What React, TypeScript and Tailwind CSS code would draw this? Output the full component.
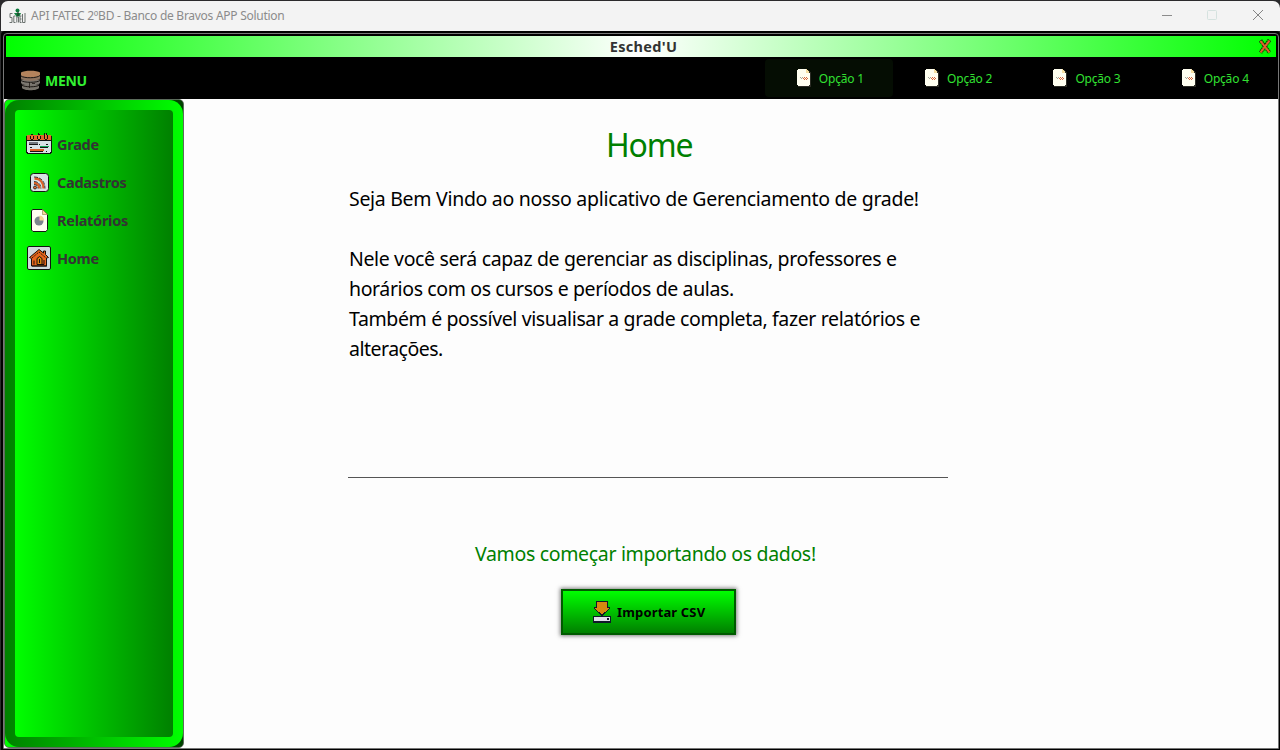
import React from "react";

function WindowLogo() {
  return (
    <svg width="17" height="17" viewBox="0 0 17 17" className="shrink-0">
      <g fill="none" stroke="#6b726f" strokeWidth="1">
        <path d="M3.500 5.500H1V9.500h2v5H.5" />
        <path d="M6.500 8H4.800v6.500h1.700" />
        <path d="M7.800 5v9.500M9.500 14.500V9H8" />
        <path d="M11 8v6.500h1.500M11 11h1.500M11 8h1.500" />
        <path d="M13.500 6v8.500h2.500V5" />
      </g>
      <circle cx="8.500" cy="2.500" r="2" fill="#0c7a3c" />
      <path d="M5 5h7L10.500 8.500H7.500z" fill="#12803f" />
      <path d="M9 4v4" stroke="#222" />
    </svg>
  );
}

function DatabaseIcon() {
  return (
    <svg width="19" height="21" viewBox="0 0 19 21" className="shrink-0">
      <path d="M1 14.500V18c2 3 15 3 17 0v-3.500z" fill="#77736b" />
      <path d="M0 9.500V13c2 3 17 3 19 0V9.500z" fill="#7b7770" />
      <path d="M0 4v4.500c2 3 17 3 19 0V4z" fill="#8d7460" />
      <path d="M0 2.500C3 0 16 0 19 2.500V5C16 8 3 8 0 5z" fill="#b4835c" />
      <path d="M0 6c3 2.400 16 2.400 19-.5M0 10.500c3 2.400 16 2.400 19 0M.5 15c3 2.400 15 2.400 18 0" fill="none" stroke="#110d0a" strokeWidth=".9" />
      <path d="M8.500 12v6M11 13.500h3" fill="none" stroke="#201a15" strokeWidth=".8" />
    </svg>
  );
}

function DocIcon() {
  return (
    <svg width="15" height="18" viewBox="0 0 15 18" shapeRendering="crispEdges" className="shrink-0">
      <path d="M1 1h10l3 3v14H1z" fill="#2b2b24" />
      <path d="M1 0h8v4h4v12h-1v1H1v-1H0V1h1z" fill="#fffff0" />
      <path d="M9 0h1v1h1v1h1v2H9z" fill="#f5dfa0" />
      <path d="M3 8h1v1H3zM5 8h1v1H5zM4 9h1v1H4z" fill="#a5a59c" />
      <path d="M6 9h1v1H6zM7 8h1v1H7zM8 9h1v1H8zM7 10h1v1H7zM9 8h1v1H9zM9 10h1v1H9zM10 9h1v1h-1z" fill="#d9653b" />
    </svg>
  );
}

function CalendarIcon() {
  return (
    <svg width="26" height="22" viewBox="0 0 26 22" shapeRendering="crispEdges" className="shrink-0">
      <path d="M1 2h24v1h1v17h-1v1H1v-1H0V3h1z" fill="#111" />
      <path d="M1 2h24v5H1z" fill="#e2682b" />
      <path d="M1 8h24v11h-1v1H2v-1H1z" fill="#d9e2e5" />
      <path d="M5 1h2v1H5zM12 0h1v2h-1zM13 1h1v1h-1zM18 0h1v2h-1zM20 0h1v2h-1zM4 3h1v3H4zM7 3h1v3H7zM5 6h2v1H5zM11 3h1v3h-1zM14 3h1v3h-1zM12 6h2v1h-2zM18 2h1v4h-1zM21 2h1v4h-1zM19 6h2v1h-2z" fill="#111" />
      <path d="M5 3h2v3H5zM12 3h2v3h-2zM19 1h1v5h-1z" fill="#ef7a30" />
      <path d="M3 9h9v2H3z" fill="#73777e" />
      <path d="M3 11h9v1H3zM14 14h8v1h-8zM4 18h13v1H4zM13 11h1v1h-1zM20 11h2v1h-2zM4 14h2v1H4zM20 18h1v1h-1z" fill="#171717" />
      <path d="M14 13h9v1h-9z" fill="#18a957" />
      <path d="M4 16h14v2H4z" fill="#df6226" />
    </svg>
  );
}

function FeedIcon() {
  return (
    <svg width="19" height="19" viewBox="0 0 19 19" className="shrink-0">
      <rect x=".5" y=".5" width="18" height="18" rx="3" fill="#d9e2e5" stroke="#151515" />
      <path d="M4.500 5.500c5.500 0 9 4 9 10M4 10c3 0 5.500 2.500 5.500 5.500" fill="none" stroke="#dc6128" strokeWidth="2.300" />
      <path d="M4 4c7 0 11 4.500 11 11.500M4 8.500c4 0 7 3 7 7M4 11.500c2.500 0 4 1.500 4 4" fill="none" stroke="#1a1512" strokeWidth=".8" strokeDasharray="4 1" />
      <circle cx="5" cy="14.500" r="1.500" fill="#e46b30" stroke="#151515" strokeWidth=".8" />
    </svg>
  );
}

function ReportIcon() {
  return (
    <svg width="17" height="23" viewBox="0 0 17 23" className="shrink-0">
      <path d="M1.500.5h10l5 5v15l-1.500 2H2L.5 21V2z" fill="#fffff0" stroke="#151515" />
      <path d="M11.500.5v5h5z" fill="#f8dc9a" stroke="#8d7b45" strokeWidth=".6" />
      <circle cx="8" cy="12" r="4.500" fill="#7d858d" />
      <path d="M8.500 11.500V6.500a5 5 0 0 1 4.500 5z" fill="#f6d595" />
    </svg>
  );
}

function HomeIcon() {
  return (
    <svg width="24" height="24" viewBox="0 0 24 24" className="shrink-0">
      <rect x=".5" y=".5" width="23" height="23" rx="1.500" fill="#cfdadd" stroke="#111" />
      <path d="M4.500 12.500v7.500h15v-8l2-.5-3-3V5h-2v2L12 3.500l-9.500 8z" fill="#e7661d" stroke="#17100b" strokeLinejoin="round" />
      <path d="M5 12l7-6 7 6" fill="none" stroke="#17100b" strokeWidth=".9" strokeDasharray="2 1" />
      <path d="M10 18.500v-6l2.500-2 2.500 2v6z" fill="#dd8512" stroke="#17100b" />
      <path d="M12.500 13v4M7 14.500v4M17 14v4.500H15M5 20h15" fill="none" stroke="#17100b" />
    </svg>
  );
}

function ImportIcon() {
  return (
    <svg width="18" height="23" viewBox="0 0 18 23" shapeRendering="crispEdges" className="shrink-0">
      <path d="M3.500.5h11v6h2v1L9 14.500 1.500 7.500v-1h2z" fill="#d68910" stroke="#111827" />
      <path d="M0 15h18v7H0z" fill="#10182a" />
      <path d="M1 16h16v4H1z" fill="#e0e0ea" />
      <path d="M14 17h2v2h-2z" fill="#10182a" />
    </svg>
  );
}

function CloseIcon() {
  return (
    <svg width="12" height="16" viewBox="0 0 12 16" className="shrink-0">
      <path d="M1.500 1.500l9 12M10.500 1L1.500 13.500" stroke="#1c3006" strokeWidth="4" strokeDasharray="1.500 .6" />
      <path d="M1.500 2l9 11.500M10.500 1.500L1.500 13.500" stroke="#e5602c" strokeWidth="2" />
    </svg>
  );
}

const options = ["Opção 1", "Opção 2", "Opção 3", "Opção 4"];

const menu = [
  { label: "Grade", icon: <CalendarIcon /> },
  { label: "Cadastros", icon: <FeedIcon /> },
  { label: "Relatórios", icon: <ReportIcon /> },
  { label: "Home", icon: <HomeIcon /> },
];

export default function App() {
  return (
    <div className="flex h-[750px] w-[1280px] flex-col overflow-hidden bg-[#2b2a2c] pl-px pt-px font-['Noto_Sans',sans-serif]">
      <header className="flex h-[30px] shrink-0 items-center rounded-t-[7px] bg-[#f3f3f3] pl-2">
        <WindowLogo />
        <span className="ml-[5px] whitespace-nowrap text-[12px] tracking-[-0.27px] text-[#8b8b8b]">API FATEC 2ºBD - Banco de Bravos APP Solution</span>
        <svg width="110" height="14" viewBox="0 0 110 14" fill="none" className="-mt-[2px] ml-auto mr-[9px]">
          <path d="M1 7.500h10" stroke="#8c8c8c" />
          <rect x="46.500" y="2.500" width="9" height="9" rx="1" stroke="#d5e2df" />
          <path d="M92 2l10 10M102 2L92 12" stroke="#858585" />
        </svg>
      </header>
      <div className="flex min-h-0 flex-1 flex-col rounded-t-[4px] bg-black pb-px pl-[2px] pr-px pt-[2px]">
        <div className="flex min-h-0 flex-1 flex-col rounded-t-[4px] border border-[#777] bg-black pt-[2px]">
          <div className="ml-[2px] mr-[2px] flex h-[21px] shrink-0 items-center bg-[linear-gradient(to_right,#00ff00,#ffffff_50%,#00ff00)]">
            <span className="w-[21px]" />
            <span className="flex-1 pl-[1px] text-center text-[14.500px] font-bold tracking-[0.3px] text-[#333]">Esched'U</span>
            <span className="mr-[5px]"><CloseIcon /></span>
          </div>
          <nav className="flex h-[42px] shrink-0 items-start pl-[17px]">
            <div className="flex h-full items-center gap-[5px] pt-[5px]">
              <DatabaseIcon />
              <span className="text-[14px] font-bold tracking-[-0.3px] text-[#32f032]">MENU</span>
            </div>
            <div className="ml-auto flex pt-[2px]">
              {options.map((o, i) => (
                <div key={o} className={"flex h-[38px] w-[128.300px] items-center gap-[7px] rounded-sm pl-[32px] " + (i === 0 ? "bg-[#050d03]" : "")}>
                  <DocIcon />
                  <span className="whitespace-nowrap pt-[2px] text-[12px] tracking-[-0.2px] text-[#32e032]">{o}</span>
                </div>
              ))}
            </div>
          </nav>
          <div className="flex min-h-0 flex-1 bg-white">
            <aside className="flex w-[180px] overflow-hidden rounded-[5px] border border-[#5c6c5c] bg-[linear-gradient(to_right,#00ff00,#004000)]">
              <div className="flex flex-1 rounded-[14px] bg-[linear-gradient(to_right,#008000,#00ff00)] px-[10px] py-[10px]">
                <div className="flex-1 rounded-[4px] bg-[linear-gradient(to_right,#00ff00,#008000)] pl-[11px] pt-[15px]">
                  {menu.map((m) => (
                    <div key={m.label} className="flex h-[38px] items-center gap-[5px]">
                      <div className="flex w-[26px] justify-center">{m.icon}</div>
                      <span className="whitespace-nowrap pt-px text-[14.500px] font-bold tracking-[-0.27px] text-[#333]">{m.label}</span>
                    </div>
                  ))}
                </div>
              </div>
            </aside>
            <main className="flex flex-1 flex-col items-start bg-[#fdfdfd] pl-[165px] pt-[22px]">
              <h1 className="ml-[257px] h-[48px] text-[32px] leading-[48px] tracking-[-1.2px] text-[#008000]">Home</h1>
              <div className="mt-[15px] whitespace-nowrap text-[19.500px] leading-[30px] text-black">
                <p className="tracking-[-0.3px]">Seja Bem Vindo ao nosso aplicativo de Gerenciamento de grade!</p>
                <p>&nbsp;</p>
                <p className="tracking-[-0.36px]">Nele você será capaz de gerenciar as disciplinas, professores e</p>
                <p className="tracking-[-0.38px]">horários com os cursos e períodos de aulas.</p>
                <p className="tracking-[-0.37px]">Também é possível visualisar a grade completa, fazer relatórios e</p>
                <p className="tracking-[-0.5px]">alterações.</p>
              </div>
              <hr className="-ml-px mt-[113px] w-[600px] border-t border-[#555]" />
              <p className="ml-[126px] mt-[61px] whitespace-nowrap text-[19.500px] leading-[30px] tracking-[-0.33px] text-[#008000]">Vamos começar importando os dados!</p>
              <button className="ml-[212px] mt-[20px] flex h-[46px] w-[175px] items-center border-2 border-[#005a00] bg-[linear-gradient(to_bottom,#00ff00,#008000)] pl-[30px] shadow-[0_0_4px_1px_rgba(0,0,0,0.5)]">
                <ImportIcon />
                <span className="ml-[6px] whitespace-nowrap pt-px text-[13px] font-bold tracking-[0.15px] text-black">Importar CSV</span>
              </button>
            </main>
          </div>
        </div>
      </div>
    </div>
  );
}
